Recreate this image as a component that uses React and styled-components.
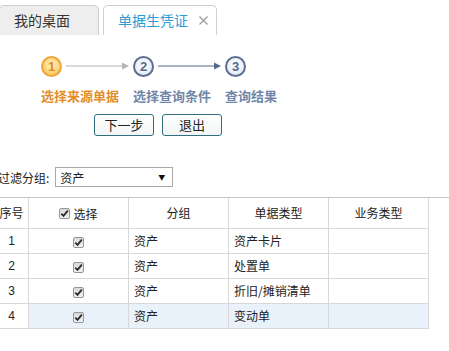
import React from "react";
import styled, { createGlobalStyle, css } from "styled-components";

const Global = createGlobalStyle`
  html, body { margin: 0; padding: 0; background: #fff; }
  body { font-family: "Noto Sans CJK SC", "Liberation Sans", sans-serif; color: #222; overflow: hidden; }
  * { box-sizing: border-box; }
`;

const Page = styled.div`
  width: 449px;
  height: 351px;
  overflow: hidden;
  display: flex;
  flex-direction: column;
`;

const TabBar = styled.div`
  display: flex;
  gap: 4px;
  padding-top: 5px;
  margin-left: -1px;
  height: 35px;
`;

const Tab = styled.div`
  display: flex;
  align-items: center;
  height: 30px;
  padding: 0 8px 1px 14px;
  border: 1px solid #cfcfcf;
  border-bottom: none;
  border-radius: 5px 5px 0 0;
  font-size: 14px;
  background: ${(p) => (p.$active ? "#fff" : "#eeeeee")};
  color: ${(p) => (p.$active ? "#2e9bd4" : "#333")};
`;

const Close = styled.span`
  margin-left: 11px;
  width: 9px;
  height: 9px;
  display: inline-flex;
  visibility: ${(p) => (p.$hidden ? "hidden" : "visible")};
`;

const Steps = styled.div`
  display: grid;
  grid-template-columns: repeat(3, 92px);
  row-gap: 12px;
  margin: 21px 0 0 41px;
`;

const StepTop = styled.div`
  display: flex;
  align-items: center;
  height: 20px;
`;

const Circle = styled.div`
  width: 21px;
  height: 21px;
  border-radius: 50%;
  display: flex;
  align-items: center;
  justify-content: center;
  font-family: "Liberation Sans", sans-serif;
  font-weight: bold;
  font-size: 13px;
  border: 2px solid;
  ${(p) =>
    p.$current
      ? css`
          border-color: #eea53a;
          background: radial-gradient(circle at 50% 40%, #fff3c8 0%, #fcd67d 55%, #f6b444 100%);
          color: #e28a22;
        `
      : css`
          border-color: #5e6e8e;
          background: radial-gradient(circle at 50% 40%, #ffffff 0%, #e6edf7 70%, #d4deec 100%);
          color: #56688c;
        `}
`;

const Arrow = styled.svg`
  margin-left: 4px;
  flex: none;
`;

const StepLabel = styled.div`
  font-size: 13px;
  font-weight: bold;
  line-height: 16px;
  white-space: nowrap;
  color: ${(p) => (p.$current ? "#e48d2b" : "#7186a8")};
`;

const Actions = styled.div`
  display: flex;
  gap: 8px;
  margin: 10px 0 0 94px;
`;

const Button = styled.button`
  width: 60px;
  height: 22px;
  padding: 0;
  border: 1px solid #2f6f7f;
  border-radius: 3px;
  background: linear-gradient(#ffffff, #f3f5f6);
  font-family: "Noto Sans CJK SC", sans-serif;
  font-size: 13px;
  color: #222;
  line-height: 20px;
`;

const Filter = styled.div`
  display: flex;
  align-items: center;
  gap: 6px;
  margin: 31px 0 0 -2px;
  font-size: 12px;
`;

const Select = styled.div`
  width: 118px;
  height: 20px;
  border: 1px solid #a8a8a8;
  display: flex;
  align-items: center;
  justify-content: space-between;
  padding: 0 7px 0 4px;
  font-size: 12px;
`;

const Caret = styled.span`
  font-size: 7px;
  color: #111;
`;

const TableArea = styled.div`
  margin-top: 10px;
  border-top: 1px solid #c8c8c8;
`;

const Table = styled.table`
  margin-left: -6px;
  border-collapse: collapse;
  table-layout: fixed;
  font-size: 12px;
`;

const Th = styled.th`
  height: 30px;
  border: 1px solid #d8d8d8;
  border-top: none;
  font-weight: normal;
  text-align: center;
  padding: 0;
  width: ${(p) => p.$w}px;
`;

const Td = styled.td`
  height: 25px;
  border: 1px solid #d8d8d8;
  padding: 0 0 0 ${(p) => (p.$align === "left" ? 5 : 0)}px;
  text-align: ${(p) => p.$align || "center"};
  font-family: ${(p) => (p.$num ? '"Liberation Sans", sans-serif' : "inherit")};
  background: ${(p) => (p.$hl ? "#e9f1fa" : "#fff")};
  color: #222;
`;

const HeadSel = styled.span`
  display: inline-flex;
  align-items: center;
  gap: 3px;
`;

const CheckBox = styled.span`
  display: inline-flex;
  align-items: center;
  justify-content: center;
  width: 11px;
  height: 11px;
  border: 1px solid #979797;
  border-radius: 2px;
  background: linear-gradient(#d9d9d9, #f2f2f2);
  vertical-align: middle;
`;

const Check = () => (
  <CheckBox>
    <svg width="9" height="9" viewBox="0 0 9 9">
      <path d="M1.3 4.6 L3.5 6.8 L7.8 1.6" fill="none" stroke="#2b2b2b" strokeWidth="1.8" />
    </svg>
  </CheckBox>
);

const ArrowIcon = ({ color }) => (
  <Arrow width="63" height="8" viewBox="0 0 63 8">
    <line x1="0" y1="4" x2="58" y2="4" stroke={color} strokeWidth="1" />
    <path d="M56 0.5 L63 4 L56 7.5 Z" fill={color} />
  </Arrow>
);

const steps = [
  { n: 1, label: "选择来源单据", current: true, arrow: "#b4b4b4" },
  { n: 2, label: "选择查询条件", arrow: "#56688c" },
  { n: 3, label: "查询结果" },
];

const rows = [
  ["1", "资产", "资产卡片"],
  ["2", "资产", "处置单"],
  ["3", "资产", "折旧/摊销清单"],
  ["4", "资产", "变动单", true],
];

const CloseIcon = () => (
  <svg width="9" height="9" viewBox="0 0 9 9">
    <path d="M0.5 0.5 L8.5 8.5 M8.5 0.5 L0.5 8.5" stroke="#9a9a9a" strokeWidth="1.2" />
  </svg>
);

export default function App() {
  return (
    <Page>
      <Global />
      <TabBar>
        <Tab>
          我的桌面
          <Close $hidden>
            <CloseIcon />
          </Close>
        </Tab>
        <Tab $active>
          单据生凭证
          <Close>
            <CloseIcon />
          </Close>
        </Tab>
      </TabBar>

      <Steps>
        {steps.map((s) => (
          <StepTop key={"c" + s.n}>
            <Circle $current={s.current}>{s.n}</Circle>
            {s.arrow && <ArrowIcon color={s.arrow} />}
          </StepTop>
        ))}
        {steps.map((s) => (
          <StepLabel key={"l" + s.n} $current={s.current}>
            {s.label}
          </StepLabel>
        ))}
      </Steps>

      <Actions>
        <Button>下一步</Button>
        <Button>退出</Button>
      </Actions>

      <Filter>
        <span>过滤分组:</span>
        <Select>
          <span>资产</span>
          <Caret>▼</Caret>
        </Select>
      </Filter>

      <TableArea>
        <Table>
          <thead>
            <tr>
              <Th $w={34}>序号</Th>
              <Th $w={100}>
                <HeadSel>
                  <Check />
                  选择
                </HeadSel>
              </Th>
              <Th $w={100}>分组</Th>
              <Th $w={100}>单据类型</Th>
              <Th $w={100}>业务类型</Th>
            </tr>
          </thead>
          <tbody>
            {rows.map(([n, g, t, hl]) => (
              <tr key={n}>
                <Td $num>{n}</Td>
                <Td $hl={hl}>
                  <Check />
                </Td>
                <Td $hl={hl} $align="left">{g}</Td>
                <Td $hl={hl} $align="left">{t}</Td>
                <Td $hl={hl} />
              </tr>
            ))}
          </tbody>
        </Table>
      </TableArea>
    </Page>
  );
}
